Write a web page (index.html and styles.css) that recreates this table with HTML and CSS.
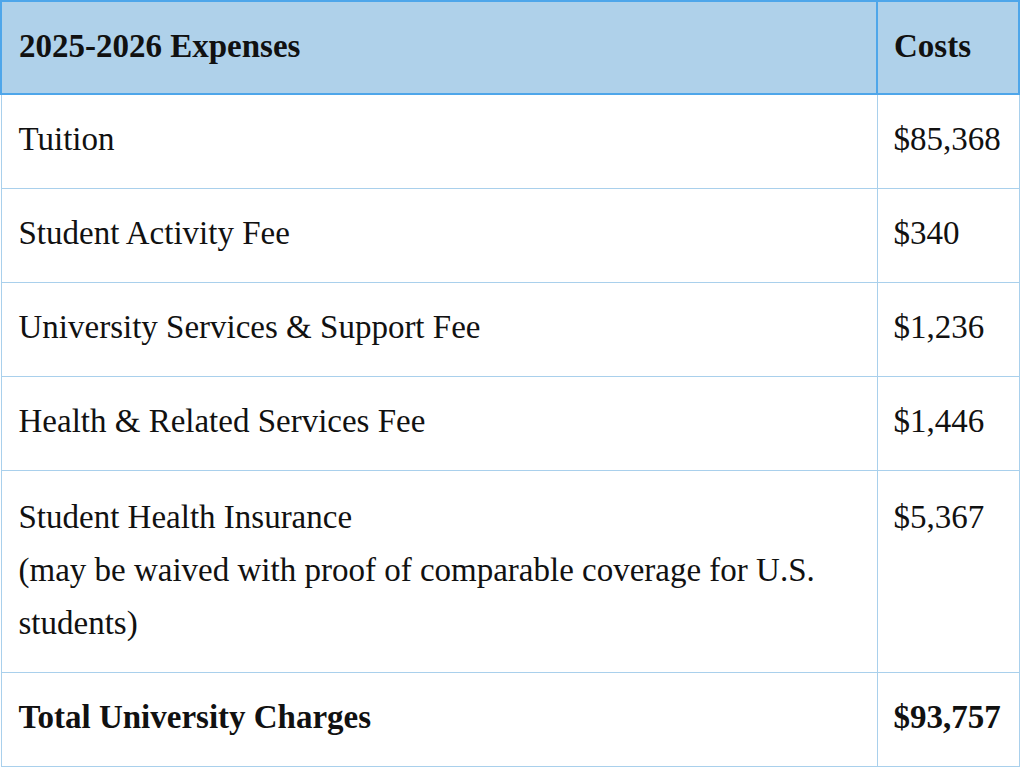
FILE: index.html
```html
<!DOCTYPE html>
<html lang="en">
<head>
<meta charset="utf-8">
<title>2025-2026 Expenses</title>
<link rel="stylesheet" href="styles.css">
</head>
<body>
<table class="costs">
  <thead>
    <tr class="head-row">
      <th class="col-item">2025-2026 Expenses</th>
      <th class="col-cost">Costs</th>
    </tr>
  </thead>
  <tbody>
    <tr><td>Tuition</td><td class="amount">$85,368</td></tr>
    <tr><td>Student Activity Fee</td><td class="amount">$340</td></tr>
    <tr><td>University Services &amp; Support Fee</td><td class="amount">$1,236</td></tr>
    <tr><td>Health &amp; Related Services Fee</td><td class="amount">$1,446</td></tr>
    <tr class="note-row"><td>Student Health Insurance<br>(may be waived with proof of comparable coverage for U.S. students)</td><td class="amount">$5,367</td></tr>
    <tr class="total-row"><td>Total University Charges</td><td class="amount">$93,757</td></tr>
  </tbody>
</table>
</body>
</html>
```

FILE: styles.css
```css
html, body {
  margin: 0;
  padding: 0;
  background: #ffffff;
}

body {
  font-family: "Liberation Serif", "Times New Roman", serif;
  color: #111111;
}

.costs {
  width: 1020px;
  border-collapse: collapse;
  font-size: 33px;
  line-height: 53px;
}

.costs th,
.costs td {
  text-align: left;
  vertical-align: top;
  padding: 18px 16px 22px 17px;
  border: 1px solid #a9d0ec;
}

.costs th {
  background: #afd1ea;
  font-weight: bold;
  border: 2px solid #4ea6ea;
  padding-top: 18px;
  padding-bottom: 20px;
}

.costs .col-cost,
.costs .amount {
  padding-left: 16px;
}

.col-item {
  width: 841px;
}

.note-row td {
  padding-top: 20px;
}

.total-row td {
  font-weight: bold;
}
```
